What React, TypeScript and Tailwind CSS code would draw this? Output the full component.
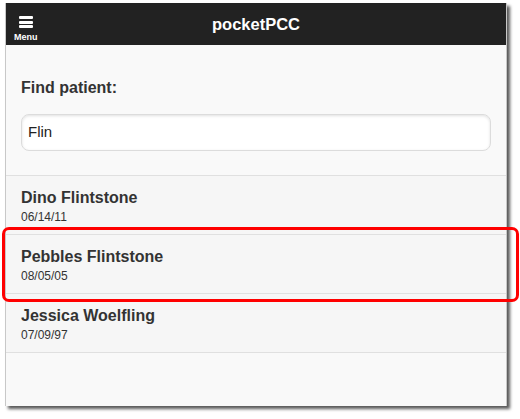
import React from 'react';

const patients = [
    { name: 'Dino Flintstone', dob: '06/14/11' },
    { name: 'Pebbles Flintstone', dob: '08/05/05' },
    { name: 'Jessica Woelfling', dob: '07/09/97' },
];

const App: React.FC = () => {
    return (
        <div className="relative w-[520px] h-[419px] bg-white overflow-hidden" style={{ fontFamily: '"Liberation Sans", Arial, sans-serif' }}>
            <div className="ml-[5px] mt-[3px] w-[502px] h-[403px] flex flex-col bg-[#f9f9f9] border-x border-[#c8c8c8] shadow-[3px_3px_3px_rgba(0,0,0,0.65)]">
                {/* Header */}
                <div className="relative h-[42px] bg-[#222222] flex items-center justify-center shrink-0">
                    <div className="absolute left-[8px] top-[13px] flex flex-col items-center">
                        <div className="flex flex-col gap-[1.5px] w-[14px]">
                            <span className="block h-[3px] bg-white rounded-[1px]" />
                            <span className="block h-[3px] bg-white rounded-[1px]" />
                            <span className="block h-[3px] bg-white rounded-[1px]" />
                        </div>
                        <span className="text-[9px] font-bold text-white leading-none mt-[5px]">Menu</span>
                    </div>
                    <h1 className="text-[16.5px] font-bold text-white">pocketPCC</h1>
                </div>

                {/* Search */}
                <div className="px-[15px] pt-[33px] pb-[24px] border-b border-[#e0e0e0]">
                    <label className="block text-[16px] font-bold text-[#333] leading-[19px]">Find patient:</label>
                    <div className="mt-[17px] h-[37px] rounded-[8px] bg-white border border-[#dcdcdc] shadow-[inset_0_1px_3px_rgba(0,0,0,0.12)] flex items-center px-[6px]">
                        <span className="text-[15px] text-[#222]">Flin</span>
                    </div>
                </div>

                {/* Results */}
                <ul className="flex flex-col">
                    {patients.map((p) => (
                        <li key={p.name} className="h-[59px] px-[15px] pt-[12px] bg-[#f6f6f6] border-b border-[#e0e0e0]">
                            <div className="text-[16px] font-bold text-[#333] leading-[20px]">{p.name}</div>
                            <div className="text-[12px] text-[#333] leading-[16px] mt-[1px]">{p.dob}</div>
                        </li>
                    ))}
                </ul>
            </div>

            {/* Highlight */}
            <div className="absolute left-[2px] top-[227px] w-[517px] h-[75px] border-[3px] border-[#ff0000] rounded-[7px] pointer-events-none" />
        </div>
    );
};

export default App;
